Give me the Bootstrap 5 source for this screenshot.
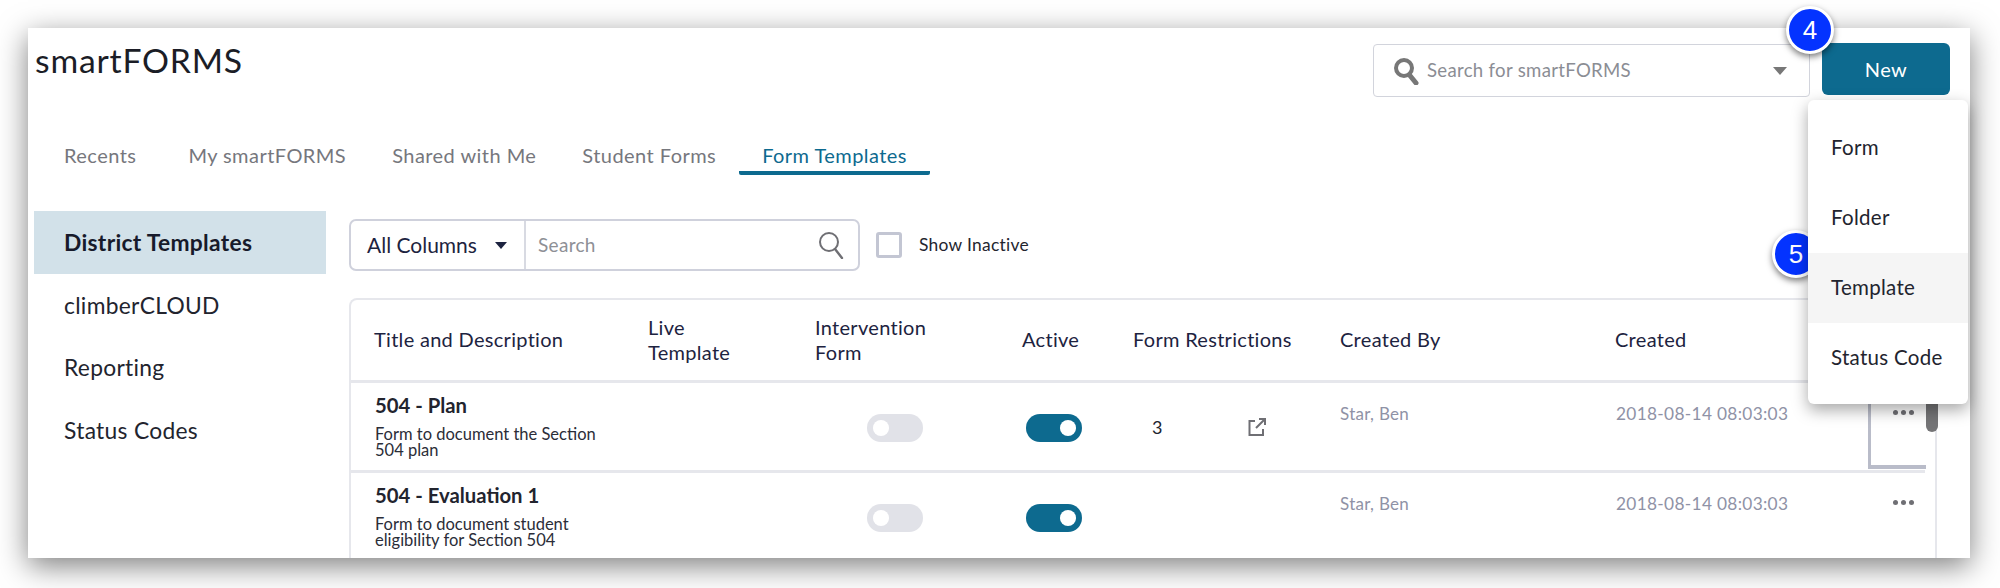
<!DOCTYPE html>
<html lang="en">
<head>
<meta charset="utf-8">
<title>smartFORMS</title>
<link rel="stylesheet" href="https://cdn.jsdelivr.net/npm/bootstrap@5.3.0/dist/css/bootstrap.min.css">
<style>
html,body{height:588px;overflow:hidden;background:#fff}
body{font-family:Lato,"Liberation Sans",sans-serif;color:#1d2233;padding:28px 30px 30px 28px}
.app-window{position:relative;height:530px;background:#fff;box-shadow:0 8px 28px rgba(0,0,0,.5)}
.app-clip{height:530px;overflow:hidden;padding-left:7px}
.app-title{font-size:33.7px;line-height:40px;margin:0;font-weight:400;letter-spacing:.8px;color:#1b1d26;padding-top:12px}
.top-search{width:437px;height:53px;margin-top:16px;margin-right:12px;border:1px solid #d2d4dc;border-radius:4px;padding:0 22px 0 19px;color:#8b8d94;font-size:18.6px;letter-spacing:.3px}
.btn-new{width:128px;height:52px;margin-top:15px;margin-right:20px;background:#0d6a8f;border:0;border-radius:6px;color:#fff;font-size:20px;letter-spacing:.5px}
.btn-new:hover{background:#0d6a8f;color:#fff}
.tri-down{width:0;height:0;border-left:7px solid transparent;border-right:7px solid transparent;border-top:8px solid #777}
.tab-row{margin-top:39px;margin-left:6px;height:46px}
.tab-link{color:#76777d;font-size:20px;letter-spacing:.45px;line-height:26px;padding:6px 23px 2.5px;border-bottom:4px solid transparent}
.tab-link:first-child{padding-right:29px}
.tab-link:hover{color:#76777d}
.tab-link.is-on{color:#0d6a8f;border-bottom-color:#0d6a8f;border-radius:2px}
.page-body{margin-top:29px;margin-left:-1px}
.side-col{width:292px;flex:none}
.side-item{height:62.5px;display:flex;align-items:center;padding-left:30px;font-size:22.8px;letter-spacing:.3px;color:#22242e}
.side-item.is-on{background:#d2e1e9;font-weight:700;color:#171a2b}
.main-col{flex:1;margin-left:23px;min-width:0}
.filter-group{width:511px;height:52px;border:2px solid #cfd1dc;border-radius:7px;margin-top:8px}
.filter-select{width:175px;flex:none;border-right:2px solid #d8dae2;padding-left:16px;font-size:21px;color:#1d2340}
.filter-select .tri-down{border-left-width:6px;border-right-width:6px;border-top-width:7px;border-top-color:#1d2340;margin-left:18px}
.filter-input{padding:0 14px 0 12px;color:#8e9096;font-size:19px;letter-spacing:.3px}
.inactive-box{width:26px;height:26px;border:3px solid #c3c6d3;border-radius:3px;margin:21px 17px 0 16px;background:#fff}
.inactive-label{font-size:17.4px;letter-spacing:.3px;margin-top:21px;color:#23252f}
.grid-wrap{margin-top:27px;width:1588px;border:2px solid #e6e7ec;border-bottom:0;border-radius:8px 0 0 0;height:262px;overflow:hidden}
.forms-table{width:1574px;table-layout:fixed;border-collapse:collapse;margin:0}
.forms-table th{font-weight:400;font-size:20px;line-height:25px;color:#1d2340;height:81px;vertical-align:middle;letter-spacing:.3px;padding:0;border-bottom:3px solid #e6e7ec}
.forms-table td{padding:0;height:90px;vertical-align:top;border-bottom:3px solid #e6e7ec;position:relative}
.forms-table th:first-child{padding-left:23px}
.forms-table td:first-child{padding-left:24px}
.row-title{font-weight:700;font-size:20.3px;line-height:26px;margin-top:9px;color:#22242e}
.row-desc{font-size:16.5px;line-height:16.5px;margin-top:8px;color:#2b2d38;width:235px}
.pale-cell{font-size:17px;color:#8f92a6;padding-top:18px!important;letter-spacing:.3px}
.date-cell{font-size:17.3px;padding-left:1px!important;letter-spacing:.32px}
.toggle-cell .form-check-input{width:56px;height:28px;margin:31px 0 0;float:none;border:0;display:block;background-color:#e1e2e8;background-image:url("data:image/svg+xml,%3csvg xmlns='http://www.w3.org/2000/svg' viewBox='-4 -4 8 8'%3e%3ccircle r='2.3' fill='%23fff'/%3e%3c/svg%3e");background-position:left center;border-radius:14px}
.toggle-cell .form-check-input:checked{background-color:#0d6a8f;background-position:right center}
.switch-a{padding-left:52px}
.switch-b{padding-left:4px}
.num-cell{font-size:18px;padding-top:31px!important;color:#22242e}
.num-value{margin-left:19px}
.link-icon{margin-left:84px}
.dots{display:flex;gap:3px;position:absolute;right:11px;top:27px}
.dots i{width:5px;height:5px;border-radius:50%;background:#6f6f74;display:block}
.scroll-thumb{position:absolute;left:1898px;top:340px;width:12px;height:64px;background:#757577;border-radius:0 0 7px 7px}
.focus-box{position:absolute;left:1840px;top:372px;width:58px;height:69px;border-left:3px solid #b9bcc9;border-bottom:4px solid #b9bcc9}
.new-menu{position:absolute;display:block;left:1780px;top:72px;width:160px;height:304px;border:0;border-radius:6px;padding:13px 0 0;background:#fff;box-shadow:0 6px 16px rgba(0,0,0,.35);margin:0}
.new-menu .dropdown-item{height:70px;display:flex;align-items:center;padding:0 23px 2px;font-size:20.5px;letter-spacing:.3px;color:#22242e}
.new-menu .dropdown-item.is-hover{background:#f5f5f5}
.step-pin{position:absolute;width:48px;height:48px;border-radius:50%;background:#0433ff;border:3.5px solid #fff;color:#fff;display:flex;align-items:center;justify-content:center;font-size:26px;box-shadow:0 3px 6px rgba(0,0,0,.5);font-family:"Liberation Sans",sans-serif}
.pin-four{left:1758px;top:-22px}
.pin-five{left:1744px;top:202px}
</style>
</head>
<body>
<div class="app-window">
  <div class="app-clip">
    <div class="d-flex">
      <h1 class="app-title me-auto">smartFORMS</h1>
      <div class="top-search d-flex align-items-center">
        <svg width="26" height="28" viewBox="0 0 26 28" class="flex-none me-2" aria-hidden="true"><circle cx="11" cy="11" r="8" fill="none" stroke="#777" stroke-width="4"/><path d="M16.5 18 L23 26" stroke="#777" stroke-width="5" stroke-linecap="round"/></svg>
        <span class="me-auto">Search for smartFORMS</span>
        <span class="tri-down"></span>
      </div>
      <button class="btn btn-new" type="button">New</button>
    </div>
    <nav class="nav tab-row align-items-start">
      <a class="nav-link tab-link" href="#">Recents</a>
      <a class="nav-link tab-link" href="#">My smartFORMS</a>
      <a class="nav-link tab-link" href="#">Shared with Me</a>
      <a class="nav-link tab-link" href="#">Student Forms</a>
      <a class="nav-link tab-link is-on" href="#">Form Templates</a>
    </nav>
    <div class="page-body d-flex">
      <div class="side-col">
        <div class="side-item is-on">District Templates</div>
        <div class="side-item">climberCLOUD</div>
        <div class="side-item">Reporting</div>
        <div class="side-item">Status Codes</div>
      </div>
      <div class="main-col">
        <div class="d-flex">
          <div class="filter-group d-flex">
            <div class="filter-select d-flex align-items-center"><span>All Columns</span><span class="tri-down"></span></div>
            <div class="filter-input d-flex flex-grow-1 align-items-center justify-content-between">
              <span>Search</span>
              <svg width="26" height="28" viewBox="0 0 26 28" aria-hidden="true"><circle cx="11" cy="11" r="9" fill="none" stroke="#6f6f74" stroke-width="2"/><path d="M17 18 L24 27" stroke="#6f6f74" stroke-width="2.4" stroke-linecap="round"/></svg>
            </div>
          </div>
          <div class="inactive-box"></div>
          <div class="inactive-label">Show Inactive</div>
        </div>
        <div class="grid-wrap">
          <table class="forms-table">
            <colgroup><col style="width:297px"><col style="width:167px"><col style="width:207px"><col style="width:111px"><col style="width:207px"><col style="width:275px"><col style="width:310px"></colgroup>
            <thead><tr><th>Title and Description</th><th>Live<br>Template</th><th>Intervention<br>Form</th><th>Active</th><th>Form Restrictions</th><th>Created By</th><th>Created</th></tr></thead>
            <tbody>
              <tr>
                <td><div class="row-title">504 - Plan</div><div class="row-desc">Form to document the Section 504 plan</div></td>
                <td></td>
                <td class="toggle-cell"><div class="switch-a"><input class="form-check-input" type="checkbox" role="switch" aria-label="Intervention"></div></td>
                <td class="toggle-cell"><div class="switch-b"><input class="form-check-input" type="checkbox" role="switch" checked aria-label="Active"></div></td>
                <td class="num-cell"><div class="d-flex align-items-center"><span class="num-value">3</span><svg class="link-icon" width="22" height="22" viewBox="0 0 22 22" aria-hidden="true"><path d="M9 5H3.5V19H17V13M10 12L19 3M13 3h6v6" fill="none" stroke="#6f6f74" stroke-width="2"/></svg></div></td>
                <td class="pale-cell">Star, Ben</td>
                <td class="pale-cell date-cell">2018-08-14 08:03:03<span class="dots"><i></i><i></i><i></i></span></td>
              </tr>
              <tr>
                <td><div class="row-title">504 - Evaluation 1</div><div class="row-desc">Form to document student eligibility for Section 504</div></td>
                <td></td>
                <td class="toggle-cell"><div class="switch-a"><input class="form-check-input" type="checkbox" role="switch" aria-label="Intervention"></div></td>
                <td class="toggle-cell"><div class="switch-b"><input class="form-check-input" type="checkbox" role="switch" checked aria-label="Active"></div></td>
                <td></td>
                <td class="pale-cell">Star, Ben</td>
                <td class="pale-cell date-cell">2018-08-14 08:03:03<span class="dots"><i></i><i></i><i></i></span></td>
              </tr>
            </tbody>
          </table>
        </div>
      </div>
    </div>
  </div>
  <div class="focus-box"></div>
  <div class="scroll-thumb"></div>
  <ul class="dropdown-menu show new-menu list-unstyled">
    <li><a class="dropdown-item" href="#">Form</a></li>
    <li><a class="dropdown-item" href="#">Folder</a></li>
    <li><a class="dropdown-item is-hover" href="#">Template</a></li>
    <li><a class="dropdown-item" href="#">Status Code</a></li>
  </ul>
  <div class="step-pin pin-four">4</div>
  <div class="step-pin pin-five">5</div>
</div>
</body>
</html>
